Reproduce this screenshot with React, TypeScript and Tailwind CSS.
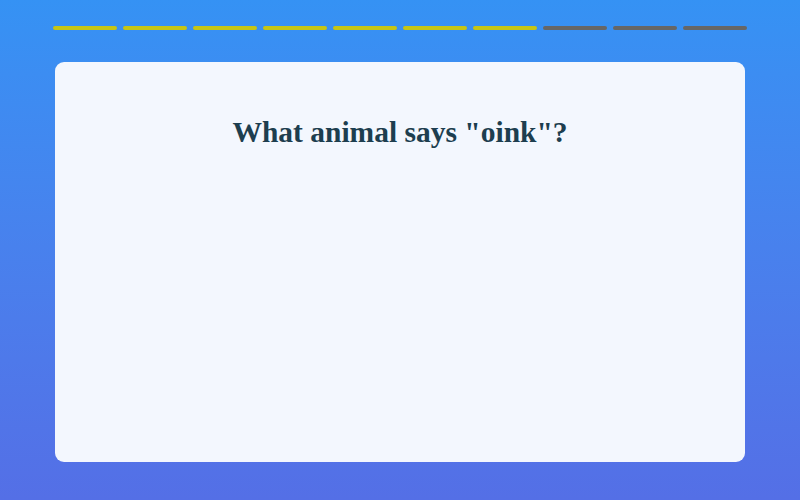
const steps = [true, true, true, true, true, true, true, false, false, false];

export default function App() {
  return (
    <div className="h-[500px] w-full bg-gradient-to-b from-[#3592f4] to-[#546fe6] px-[53px] pt-[26px]">
      {/* progress */}
      <div className="flex gap-[6px]">
        {steps.map((done, i) => (
          <div
            key={i}
            className={
              done
                ? "h-[4px] flex-1 rounded-full bg-[#c6c515]"
                : "h-[4px] flex-1 rounded-full bg-[#666666]"
            }
          />
        ))}
      </div>

      <div className="mx-[2px] mt-[32px] h-[400px] rounded-[9px] bg-[#f3f7fe] pt-[52px]">
        <h1 className="text-center font-['Liberation_Serif',serif] text-[29.5px] font-bold leading-[36px] text-[#1d3e4f]">
          What animal says "oink"?
        </h1>
      </div>
    </div>
  );
}
